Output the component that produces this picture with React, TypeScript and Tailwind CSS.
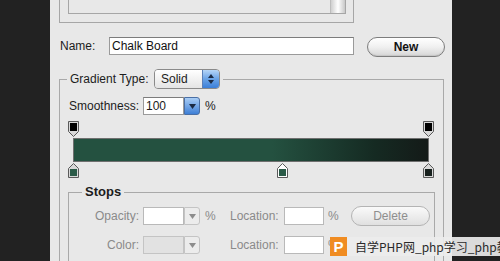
import React from "react";

const font = { fontFamily: '"Liberation Sans", Arial, sans-serif' };

function TopMarker({ left }: { left: number }) {
  return (
    <svg className="absolute top-0" style={{ left }} width="11" height="16" viewBox="0 0 11 16">
      <path d="M0.5 0.5 H10.5 V10.5 L5.5 15.5 L0.5 10.5 Z" fill="#d8d8d8" stroke="#5a5a5a" />
      <rect x="2" y="2" width="7" height="8" fill="#000" />
    </svg>
  );
}

function BottomMarker({ left, fill, selected }: { left: number; fill: string; selected?: boolean }) {
  return (
    <svg className="absolute top-0" style={{ left }} width="11" height="15" viewBox="0 0 11 15">
      <path d="M5.5 0.5 L10.5 5.5 V14.5 H0.5 V5.5 Z" fill={selected ? "#ffffff" : "#d8d8d8"} stroke="#5a5a5a" />
      <rect x="2" y="6" width="7" height="7" fill={fill} />
    </svg>
  );
}

function SmallArrow({ disabled }: { disabled?: boolean }) {
  return (
    <div
      className={
        "w-[16px] h-[18px] shrink-0 flex items-center justify-center border rounded-r-[3px] " +
        (disabled ? "border-[#c4c4c4] bg-[#ececec]" : "border-[#4a6fa5] bg-gradient-to-b from-[#a9cdf5] to-[#3d7fd6]")
      }
    >
      <svg width="7" height="5" viewBox="0 0 7 5">
        <path d="M0 0 H7 L3.5 5 Z" fill={disabled ? "#8c8c8c" : "#1b2b45"} />
      </svg>
    </div>
  );
}

export default function App() {
  return (
    <div className="relative w-[500px] h-[261px] flex bg-[#222222] overflow-hidden text-[12px] text-[#1c1c1c]" style={font}>
      <div className="w-[50px] shrink-0 bg-[#222222]" />
      <div className="w-[402px] shrink-0 bg-[#e8e8e8] flex flex-col items-start overflow-hidden">
        {/* top list box */}
        <div className="shrink-0 ml-[9px] w-[295px] h-[23px] border-x border-b border-[#a6a6a6]">
          <div className="ml-[8px] w-[278px] h-[14px] border-x border-b border-[#a6a6a6] flex justify-end">
            <div className="w-[15px] h-[13px] bg-gradient-to-r from-[#cfcfcf] via-[#ffffff] to-[#c8c8c8] border-l border-[#bdbdbd]" />
          </div>
        </div>

        {/* Name row */}
        <div className="shrink-0 mt-[14px] flex items-start">
          <div className="ml-[10px] w-[49px] leading-[18px]">Name:</div>
          <div className="w-[245px] h-[18px] bg-white border border-[#9a9a9a] border-t-[#7c7c7c] pl-[2px] leading-[16px] text-[#111]">
            Chalk Board
          </div>
          <div className="ml-[13px] w-[78px] h-[20px] rounded-full border border-[#7d7d7d] bg-gradient-to-b from-[#ffffff] via-[#f0f0f0] to-[#d6d6d6] flex items-center justify-center font-semibold text-[12px] text-[#111] shadow-[inset_0_-1px_1px_rgba(0,0,0,0.08)]">
            New
          </div>
        </div>

        {/* Gradient group */}
        <div className="shrink-0 mt-[22px] ml-[9px] w-[385px] h-[190px] border-t border-x border-[#a9a9a9] flex flex-col items-start">
          <div className="shrink-0 -mt-[11px] ml-[7px] px-[3px] bg-[#e8e8e8] flex items-center h-[20px]">
            <span className="w-[84px]">Gradient Type:</span>
            <div className="w-[66px] h-[20px] flex rounded-[4px] border border-[#8a8a8a] overflow-hidden">
              <div className="flex-1 bg-gradient-to-b from-[#ffffff] to-[#e4e4e4] pl-[6px] leading-[18px]">Solid</div>
              <div className="w-[17px] bg-gradient-to-b from-[#b6d5f7] via-[#6aa3e6] to-[#3b7fd8] border-l border-[#5b80b8] flex flex-col items-center justify-center gap-[2px]">
                <svg width="6" height="4" viewBox="0 0 6 4"><path d="M0 4 H6 L3 0 Z" fill="#1b2b45" /></svg>
                <svg width="6" height="4" viewBox="0 0 6 4"><path d="M0 0 H6 L3 4 Z" fill="#1b2b45" /></svg>
              </div>
            </div>
          </div>

          {/* Smoothness */}
          <div className="shrink-0 mt-[8px] ml-[9px] flex items-center h-[18px]">
            <span className="w-[74px]">Smoothness:</span>
            <div className="w-[41px] h-[18px] bg-white border border-[#9a9a9a] border-t-[#7c7c7c] pl-[2px] leading-[16px]">100</div>
            <SmallArrow />
            <span className="ml-[5px]">%</span>
          </div>

          {/* gradient bar with stops */}
          <div className="shrink-0 mt-[6px] ml-[8px] w-[366px] flex flex-col">
            <div className="relative h-[16px] shrink-0">
              <TopMarker left={0} />
              <TopMarker left={355} />
            </div>
            <div className="shrink-0 mx-[5px] mt-[1px] h-[24px] border border-[#6f6f6f] bg-[linear-gradient(to_right,#245140_0%,#245140_56%,#152a22_85%,#141a18_100%)]" />
            <div className="relative h-[15px] mt-[1px] shrink-0">
              <BottomMarker left={0} fill="#2a5a47" />
              <BottomMarker left={209} fill="#2a5a47" selected />
              <BottomMarker left={355} fill="#17201d" />
            </div>
          </div>

          {/* Stops group */}
          <div className="shrink-0 mt-[14px] ml-[8px] w-[367px] h-[90px] border-t border-x border-[#a9a9a9] flex flex-col items-start">
            <div className="shrink-0 -mt-[8px] ml-[13px] px-[3px] bg-[#e8e8e8] font-semibold leading-[14px] text-[13px]">Stops</div>

            <div className="shrink-0 mt-[7px] flex items-center h-[20px] text-[#8a8a8a]">
              <span className="w-[70px] text-right">Opacity:</span>
              <div className="ml-[4px] w-[41px] h-[18px] bg-white border border-[#b9b9b9]" />
              <SmallArrow disabled />
              <span className="ml-[5px] w-[11px]">%</span>
              <span className="ml-[14px] w-[54px]">Location:</span>
              <div className="w-[40px] h-[18px] bg-white border border-[#b9b9b9]" />
              <span className="ml-[4px] w-[9px]">%</span>
              <div className="ml-[14px] w-[79px] h-[20px] rounded-full border border-[#b4b4b4] bg-gradient-to-b from-[#fafafa] to-[#e0e0e0] flex items-center justify-center text-[#8e8e8e]">
                Delete
              </div>
            </div>

            <div className="shrink-0 mt-[10px] flex items-center h-[18px] text-[#8a8a8a]">
              <span className="w-[70px] text-right">Color:</span>
              <div className="ml-[4px] w-[41px] h-[18px] bg-[#e2e2e2] border border-[#c4c4c4]" />
              <SmallArrow disabled />
              <span className="ml-[5px] w-[11px]" />
              <span className="ml-[14px] w-[54px]">Location:</span>
              <div className="w-[40px] h-[18px] bg-white border border-[#b9b9b9]" />
              <span className="ml-[4px] w-[9px]">%</span>
            </div>
          </div>
        </div>
      </div>
      <div className="flex-1 bg-[#222222]" />

      {/* watermark overlay */}
      <div className="absolute left-[330px] top-[237px] w-[170px] h-[19px] flex items-center bg-[rgba(236,236,236,0.92)] overflow-hidden">
        <div className="w-[17px] h-[19px] shrink-0 bg-[#f08c22] flex items-center justify-center text-white font-bold text-[15px] leading-none">P</div>
        <span
          className="ml-[8px] whitespace-nowrap text-[12px] leading-[19px] text-[#2a2a2a]"
          style={{ fontFamily: '"Noto Sans CJK SC", "Liberation Sans", sans-serif' }}
        >
          自学PHP网_php学习_php教程
        </span>
      </div>
    </div>
  );
}
